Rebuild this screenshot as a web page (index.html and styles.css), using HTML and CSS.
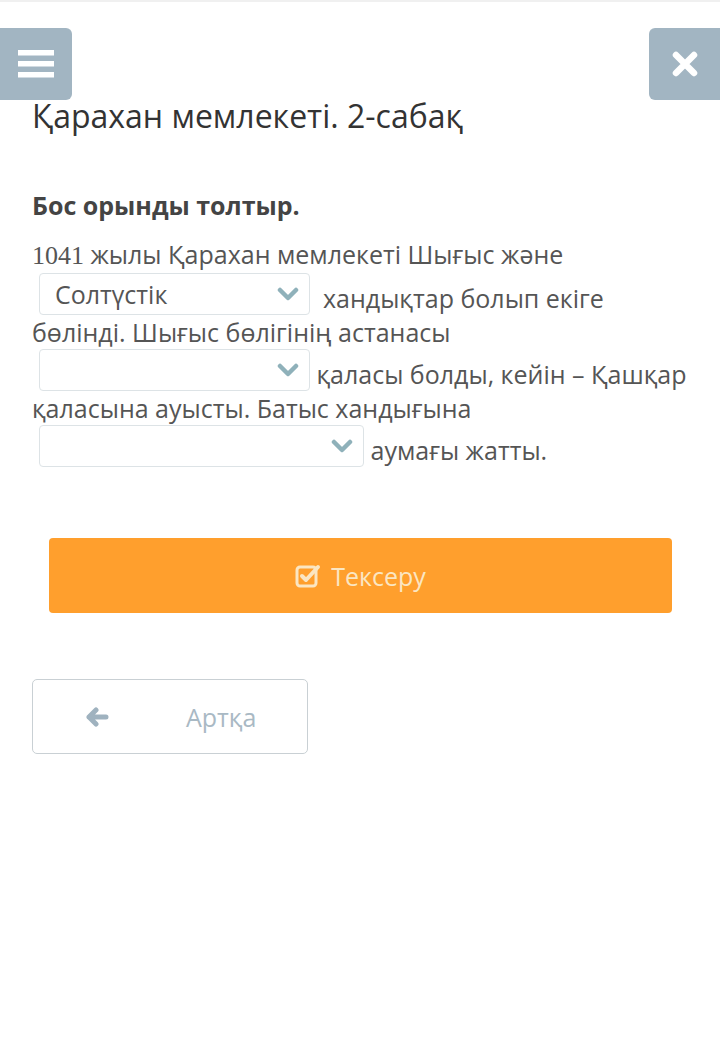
FILE: index.html
```html
<!DOCTYPE html>
<html lang="kk">
<head>
    <meta charset="UTF-8" />
    <meta name="viewport" content="width=device-width, initial-scale=1.0" />
    <title>Қарахан мемлекеті. 2-сабақ</title>
    <link rel="stylesheet" href="styles.css">
</head>
<body>
    <div class="top-line"></div>
    <div class="top-bar">
        <button class="corner-btn menu" aria-label="Мәзір">
            <svg width="36" height="28" viewBox="0 0 36 28"><rect x="0" y="0" width="36" height="5.5" fill="#fff"/><rect x="0" y="11" width="36" height="5.5" fill="#fff"/><rect x="0" y="22" width="36" height="5.5" fill="#fff"/></svg>
        </button>
        <button class="corner-btn close" aria-label="Жабу">
            <svg width="26" height="26" viewBox="0 0 26 26"><path d="M4 4 L22 22 M22 4 L4 22" stroke="#fff" stroke-width="6.5" stroke-linecap="round"/></svg>
        </button>
    </div>

    <div class="lesson">
        <h1 class="lesson-title">Қарахан мемлекеті. 2-сабақ</h1>

        <p class="task">Бос орынды толтыр.</p>

        <p class="task-text">
            <span class="num">1041</span> жылы Қарахан мемлекеті Шығыс және
            <span class="blank w270"><span class="blank-inner"><span class="blank-value">Солтүстік</span><svg class="chev" width="22" height="14" viewBox="0 0 22 14"><path d="M3 3 L11 11 L19 3" fill="none" stroke="#8fb1ba" stroke-width="4.5" stroke-linecap="round" stroke-linejoin="round"/></svg></span></span>
            &nbsp;хандықтар болып екіге бөлінді. Шығыс бөлігінің астанасы
            <span class="blank w270"><span class="blank-inner"><span class="blank-value"></span><svg class="chev" width="22" height="14" viewBox="0 0 22 14"><path d="M3 3 L11 11 L19 3" fill="none" stroke="#8fb1ba" stroke-width="4.5" stroke-linecap="round" stroke-linejoin="round"/></svg></span></span>
            қаласы болды, кейін – Қашқар қаласына ауысты. Батыс хандығына
            <span class="blank w324"><span class="blank-inner"><span class="blank-value"></span><svg class="chev" width="22" height="14" viewBox="0 0 22 14"><path d="M3 3 L11 11 L19 3" fill="none" stroke="#8fb1ba" stroke-width="4.5" stroke-linecap="round" stroke-linejoin="round"/></svg></span></span>
            аумағы жатты.
        </p>

        <button class="check-btn">
            <svg width="26" height="24" viewBox="0 0 26 24"><rect x="2" y="3" width="19" height="19" rx="3" fill="none" stroke="#fbe6c2" stroke-width="3"/><path d="M7 12 L11 16 L23 3" fill="none" stroke="#fbe6c2" stroke-width="4" stroke-linecap="round" stroke-linejoin="round"/></svg>
            <span>Тексеру</span>
        </button>

        <button class="back-btn">
            <svg width="24" height="20" viewBox="0 0 24 20"><path d="M11 3 L4 10 L11 17 M4 10 L21 10" fill="none" stroke="#9fb2bf" stroke-width="5" stroke-linecap="round" stroke-linejoin="round"/></svg>
            <span>Артқа</span>
        </button>
    </div>
</body>
</html>
```

FILE: styles.css
```css
body {
    margin: 0;
    background: #fff;
    font-family: "Open Sans", Arial, sans-serif;
    color: #555;
}
.top-line {
    height: 2px;
    background: #f0f0f0;
}
.top-bar {
    display: flex;
    justify-content: space-between;
    margin-top: 26px;
    height: 72px;
}
.corner-btn {
    width: 72px;
    height: 72px;
    border: none;
    background: #a2b5c2;
    border-radius: 6px;
    display: flex;
    align-items: center;
    justify-content: center;
    padding: 0;
}
.corner-btn.menu {
    border-radius: 0 6px 6px 0;
}
.corner-btn.close {
    width: 71px;
    border-radius: 6px 0 0 6px;
}
.lesson {
    padding: 0 32px;
}
.lesson-title {
    font-weight: 400;
    font-size: 32px;
    color: #333;
    margin: 0;
    line-height: 32px;
}
.task {
    font-weight: 700;
    font-size: 25px;
    color: #444;
    margin: 58px 0 0;
    line-height: 30px;
}
.task-text {
    font-size: 25px;
    line-height: 34px;
    margin: 17px 0 0;
}
.num {
    font-family: "Liberation Serif", serif;
    font-size: 26px;
}
.blank {
    display: inline-block;
    overflow: hidden;
    box-sizing: border-box;
    height: 42px;
    margin-left: 7px;
    border: 1px solid #dde3e6;
    border-radius: 4px;
    vertical-align: -7px;
    background: #fff;
}
.blank-inner {
    display: flex;
    align-items: center;
    justify-content: space-between;
    height: 100%;
    padding: 0 10px 0 15px;
    font-size: 25px;
    color: #555;
}
.w270 {
    width: 271px;
}
.w324 {
    width: 325px;
}
.check-btn {
    display: flex;
    align-items: center;
    justify-content: center;
    gap: 10px;
    width: 623px;
    height: 75px;
    margin: 71px 0 0 17px;
    border: none;
    border-radius: 4px;
    background: #ff9f2d;
    color: #fbe6c2;
    font-family: "Open Sans", Arial, sans-serif;
    font-size: 25px;
}
.back-btn {
    display: flex;
    align-items: center;
    width: 276px;
    height: 75px;
    margin-top: 66px;
    padding: 0 0 0 52px;
    border: 1px solid #c9d0d4;
    border-radius: 5px;
    background: #fff;
    color: #a9b9c4;
    font-family: "Open Sans", Arial, sans-serif;
    font-size: 25px;
    gap: 77px;
}
```
